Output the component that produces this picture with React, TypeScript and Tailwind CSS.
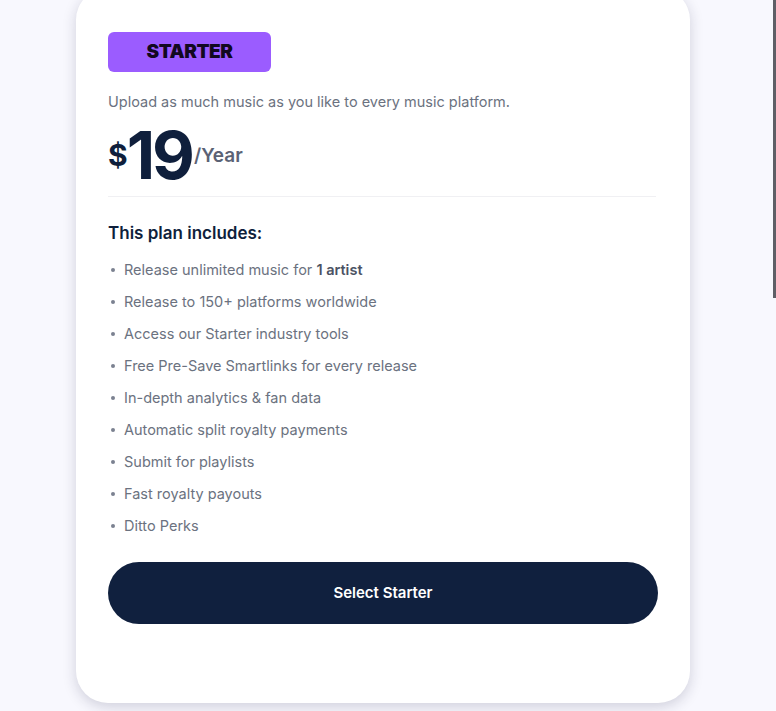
import React from "react";

const features: { text: string; bold?: string }[] = [
  { text: "Release unlimited music for ", bold: "1 artist" },
  { text: "Release to 150+ platforms worldwide" },
  { text: "Access our Starter industry tools" },
  { text: "Free Pre-Save Smartlinks for every release" },
  { text: "In-depth analytics & fan data" },
  { text: "Automatic split royalty payments" },
  { text: "Submit for playlists" },
  { text: "Fast royalty payouts" },
  { text: "Ditto Perks" },
];

export default function App() {
  return (
    <div className="relative h-[711px] w-[776px] overflow-hidden bg-[#f8f8fe] font-['Inter',sans-serif]">
      {/* scrollbar thumb */}
      <div className="absolute right-0 top-0 h-[298px] w-[3px] bg-[#5f5f66]" />

      <div className="ml-[76px] mt-[-12px] h-[715px] w-[614px] rounded-[32px] bg-white px-8 pt-[44px] shadow-[0_4px_14px_rgba(30,30,60,0.18)]">
        <div className="flex h-10 w-[163px] items-center justify-center rounded-md bg-[#9b5cff] text-[19px] font-black tracking-tight text-[#120820]">
          STARTER
        </div>

        <p className="mt-[19px] text-[14.5px] text-[#6b7280]">
          Upload as much music as you like to every music platform.
        </p>

        <div className="mt-[10px] flex items-start">
          <span className="mt-[17px] text-[30px] font-bold leading-none text-[#0f1f3c]">$</span>
          <span className="ml-[-1px] text-[66px] font-bold leading-[64px] tracking-[-3px] text-[#0f1f3c]">19</span>
          <span className="ml-[2px] mt-[23px] text-[19px] font-semibold leading-none text-[#5b6275]">/Year</span>
        </div>

        <div className="mt-[9px] mr-[2px] h-px bg-[#f0f0f3]" />

        <h3 className="mt-[24px] text-[17px] font-semibold text-[#0f1f3c]">This plan includes:</h3>

        <ul className="mt-[13px] flex flex-col gap-[10px] pl-[3px]">
          {features.map((f) => (
            <li key={f.text} className="flex h-[22px] items-center text-[14.5px] text-[#6b7280]">
              <span className="mr-[9px] h-[4px] w-[4px] rounded-full bg-[#7b8190]" />
              <span>
                {f.text}
                {f.bold && <b className="font-semibold text-[#4b5263]">{f.bold}</b>}
              </span>
            </li>
          ))}
        </ul>

        <button className="mt-[25px] flex h-[62px] w-[550px] items-center justify-center rounded-full bg-[#10203e] text-[15px] font-semibold text-white">
          Select Starter
        </button>
      </div>
    </div>
  );
}
